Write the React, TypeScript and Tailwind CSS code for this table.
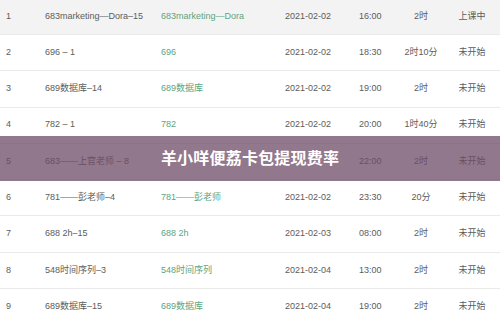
import React from 'react';

type Row = {
  no: number;
  name: string;
  course: string;
  date: string;
  time: string;
  duration: string;
  status: string;
};

// row 5's date sits under the banner title, so it is left out
const rows: Row[] = [
  { no: 1, name: '683marketing—Dora–15', course: '683marketing—Dora', date: '2021-02-02', time: '16:00', duration: '2时', status: '上课中' },
  { no: 2, name: '696 – 1', course: '696', date: '2021-02-02', time: '18:30', duration: '2时10分', status: '未开始' },
  { no: 3, name: '689数据库–14', course: '689数据库', date: '2021-02-02', time: '19:00', duration: '2时', status: '未开始' },
  { no: 4, name: '782 – 1', course: '782', date: '2021-02-02', time: '20:00', duration: '1时40分', status: '未开始' },
  { no: 5, name: '683——上官老师 – 8', course: '', date: '', time: '22:00', duration: '2时', status: '未开始' },
  { no: 6, name: '781——彭老师–4', course: '781——彭老师', date: '2021-02-02', time: '23:30', duration: '20分', status: '未开始' },
  { no: 7, name: '688 2h–15', course: '688 2h', date: '2021-02-03', time: '08:00', duration: '2时', status: '未开始' },
  { no: 8, name: '548时间序列–3', course: '548时间序列', date: '2021-02-04', time: '13:00', duration: '2时', status: '未开始' },
  { no: 9, name: '689数据库–15', course: '689数据库', date: '2021-02-04', time: '19:00', duration: '2时', status: '未开始' },
];

export default function App() {
  return (
    <div
      className="relative w-[500px] h-[318px] overflow-hidden bg-white text-[9px] text-[#5c5c5c]"
      style={{ fontFamily: '"Liberation Sans", "Noto Sans CJK SC", sans-serif' }}
    >
      <div className="-mt-[1.3px]">
        {rows.map((r) => (
          <div
            key={r.no}
            className={`grid grid-cols-[45px_116px_124px_74px_36px_52px_50px] items-center h-[36.3px] border-b border-[#e9e9e9] ${
              r.no === 1 ? 'bg-[#f3f3f3]' : 'bg-white'
            }`}
          >
            <span className="pl-[6px]">{r.no}</span>
            <span className="whitespace-nowrap">{r.name}</span>
            <span className="whitespace-nowrap text-[#5da47f]">{r.course}</span>
            <span>{r.date}</span>
            <span>{r.time}</span>
            <span className="text-center whitespace-nowrap">{r.duration}</span>
            <span className="text-center">{r.status}</span>
          </div>
        ))}
      </div>

      <div className="absolute left-0 right-0 top-[136px] h-[45px] flex items-center justify-center bg-[#6e4b66]/75">
        <span className="text-white text-[16px] font-bold tracking-[0.2px]">羊小咩便荔卡包提现费率</span>
      </div>
    </div>
  );
}
